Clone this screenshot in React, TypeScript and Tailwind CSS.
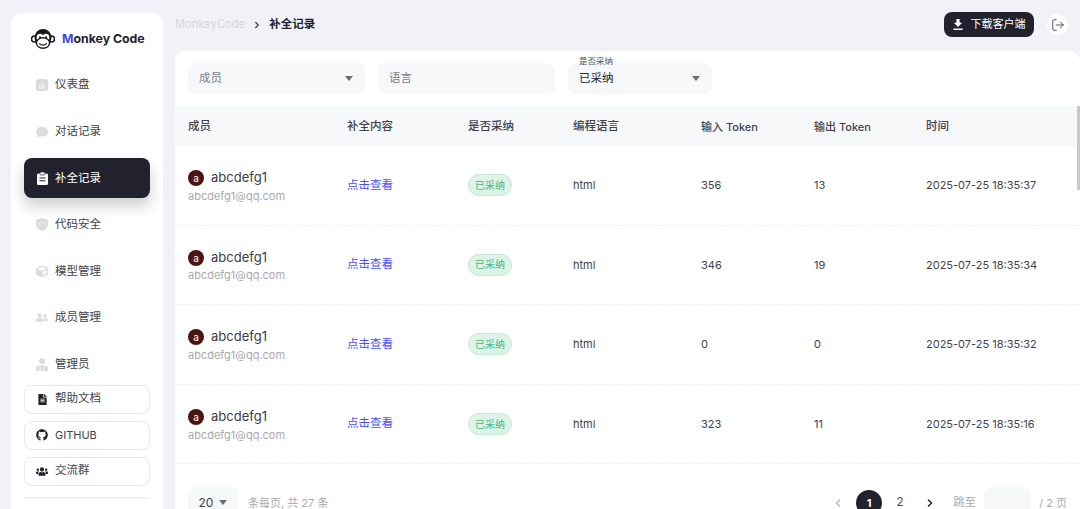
import { ChevronLeft, ChevronRight, LogOut } from "lucide-react";
import { FaGithub, FaUsers, FaFileAlt, FaCube, FaUserFriends, FaComment } from "react-icons/fa";

const font = "font-['Inter','Noto_Sans_CJK_SC',sans-serif]";

function ChartIcon() {
  return (
    <svg width="12" height="12" viewBox="0 0 12 12">
      <rect width="12" height="12" rx="2.5" fill="#d9d9db" />
      <path d="M3 6.5h1.4V10H3zM5.3 3h1.4v7H5.3zM7.6 5.5H9V10H7.6z" fill="#f1f1f2" />
    </svg>
  );
}

function ClipboardIcon() {
  return (
    <svg width="11" height="13" viewBox="0 0 11 13">
      <path d="M1.5 1.5h8A1.5 1.5 0 0 1 11 3v8.5A1.5 1.5 0 0 1 9.5 13h-8A1.5 1.5 0 0 1 0 11.5V3a1.5 1.5 0 0 1 1.5-1.5z" fill="#fff" />
      <rect x="3" y="0" width="5" height="3" rx="1" fill="#fff" stroke="#21222d" strokeWidth="0.7" />
      <path d="M2.5 6h6M2.5 8.7h6" stroke="#21222d" strokeWidth="1.1" />
    </svg>
  );
}

function ShieldIcon() {
  return (
    <svg width="12" height="13" viewBox="0 0 12 13">
      <path d="M6 0l6 1.8v4.7c0 3-2.5 5.3-6 6.5C2.5 11.8 0 9.5 0 6.5V1.8z" fill="#dcdcde" />
      <path d="M4.3 4.5L2.8 6l1.5 1.5M7.7 4.5L9.2 6 7.7 7.5" fill="none" stroke="#f4f4f5" strokeWidth="0.9" />
    </svg>
  );
}

function AdminIcon() {
  return (
    <svg width="12" height="13" viewBox="0 0 12 13">
      <circle cx="6" cy="3.2" r="3" fill="#dcdcde" />
      <path d="M0 13v-2.5C0 8.5 2 7.3 6 7.3s6 1.2 6 3.2V13z" fill="#dcdcde" />
      <path d="M4 8.5V13M8 8.5V13" stroke="#fff" strokeWidth="0.8" />
    </svg>
  );
}

function DownloadIcon() {
  return (
    <svg width="10" height="11" viewBox="0 0 10 11">
      <path d="M3.4 0h3.2v3.8H9.2L5 8 .8 3.8h2.6z" fill="#fff" />
      <rect x="0.3" y="9.5" width="9.4" height="1.4" fill="#fff" />
    </svg>
  );
}

const navItems = [
  { label: "仪表盘", icon: <ChartIcon /> },
  { label: "对话记录", icon: <FaComment size={12} /> },
  { label: "补全记录", icon: <ClipboardIcon />, active: true },
  { label: "代码安全", icon: <ShieldIcon /> },
  { label: "模型管理", icon: <FaCube size={13} /> },
  { label: "成员管理", icon: <FaUserFriends size={13} /> },
  { label: "管理员", icon: <AdminIcon /> },
];

const rows = [
  { input: "356", output: "13", time: "2025-07-25 18:35:37" },
  { input: "346", output: "19", time: "2025-07-25 18:35:34" },
  { input: "0", output: "0", time: "2025-07-25 18:35:32" },
  { input: "323", output: "11", time: "2025-07-25 18:35:16" },
];

const cols = "grid grid-cols-[159px_121px_105px_128px_113px_112px_1fr] items-center px-[13px]";

function Caret() {
  return <span className="w-0 h-0 border-x-[4px] border-x-transparent border-t-[5px] border-t-[#6b6b70]" />;
}

function MonkeyLogo() {
  return (
    <svg width="24" height="20" viewBox="0 0 24 20">
      <circle cx="3.5" cy="10" r="3" fill="#fff" stroke="#16161a" strokeWidth="1.6" />
      <circle cx="20.5" cy="10" r="3" fill="#fff" stroke="#16161a" strokeWidth="1.6" />
      <circle cx="12" cy="8.5" r="8.5" fill="#16161a" />
      <ellipse cx="9" cy="8.5" rx="3.4" ry="3.8" fill="#fff" />
      <ellipse cx="15" cy="8.5" rx="3.4" ry="3.8" fill="#fff" />
      <ellipse cx="12" cy="14" rx="6.6" ry="5.3" fill="#fff" stroke="#16161a" strokeWidth="1.4" />
      <circle cx="9" cy="8.2" r="1" fill="#16161a" />
      <circle cx="15" cy="8.2" r="1" fill="#16161a" />
      <path d="M8.5 14.7c1.8 1.8 5.2 1.8 7 0" fill="none" stroke="#16161a" strokeWidth="1.2" strokeLinecap="round" />
    </svg>
  );
}

function Sidebar() {
  return (
    <aside className="w-[152px] h-[520px] mt-[13px] ml-[11px] shrink-0 bg-white rounded-t-[10px] px-[13px] flex flex-col">
      <div className="flex items-center h-[24px] mt-[14px] ml-[7px] gap-[7px] shrink-0">
        <MonkeyLogo />
        <span className="text-[12.3px] font-bold text-[#21222d] whitespace-nowrap">
          <span className="text-[#3f45f5]">M</span>onkey Code
        </span>
      </div>
      <nav className="flex flex-col gap-[6.6px] mt-[14px] shrink-0">
        {navItems.map((item) => (
          <div
            key={item.label}
            className={
              item.active
                ? "h-10 rounded-[8px] bg-[#21222d] text-white flex items-center gap-[7px] px-[12px] text-[11.5px] shadow-[0_8px_14px_rgba(33,34,45,0.22)]"
                : "h-10 rounded-[8px] text-[#41424d] flex items-center gap-[7px] px-[12px] text-[11.5px]"
            }
          >
            <span className={item.active ? "w-[12px] flex justify-center text-white" : "w-[12px] flex justify-center text-[#dcdcde]"}>
              {item.icon}
            </span>
            {item.label}
          </div>
        ))}
      </nav>
      <div className="flex flex-col gap-[7px] shrink-0">
        <SideButton icon={<FaFileAlt size={11} />} label="帮助文档" />
        <SideButton icon={<FaGithub size={12} />} label="GITHUB" />
        <SideButton icon={<FaUsers size={13} />} label="交流群" />
      </div>
      <div className="h-[2px] bg-[#f0f1f4] mt-[11px]" />
    </aside>
  );
}

function SideButton({ icon, label }: { icon: React.ReactNode; label: string }) {
  return (
    <div className="h-[29px] rounded-[8px] border border-[#e8e8ec] flex items-center gap-[7px] px-[11px] text-[11.5px] text-[#41424d]">
      <span className="w-[12px] flex justify-center text-[#21222d]">{icon}</span>
      {label === "GITHUB" ? <span className="text-[11px]">{label}</span> : label}
    </div>
  );
}

function Filter({ label, caret, width, value }: { label: string; caret?: boolean; width: string; value?: string }) {
  return (
    <div className={`relative h-[31px] rounded-[8px] bg-[#f7f8fa] flex items-center justify-between pl-[11px] pr-[12px] ${width}`}>
      <span className={value ? "text-[11.5px] text-[#21222d]" : "text-[11.5px] text-[#7d7e85]"}>{value ?? label}</span>
      {caret && <Caret />}
      {value && (
        <span className="absolute left-[11px] top-[-7px] text-[8.5px] leading-[11px] text-[#55565e]">{label}</span>
      )}
    </div>
  );
}

function TableRow({ input, output, time }: { input: string; output: string; time: string }) {
  return (
    <div className={`${cols} h-[79.6px] border-b border-dashed border-[#eeeff2] text-[11px] text-[#41424d]`}>
      <div className="flex flex-col mt-[2px]">
        <div className="flex items-center gap-[7px]">
          <span className="w-4 h-4 rounded-full bg-[#4a1512] text-white text-[10px] leading-none flex items-center justify-center">a</span>
          <span className="text-[13px] text-[#3c3d48]">abcdefg1</span>
        </div>
        <span className="text-[11px] text-[#a9a9ae]">abcdefg1@qq.com</span>
      </div>
      <span className="text-[#4b50f5] text-[11.5px]">点击查看</span>
      <span className="w-[44px] h-[22px] rounded-full bg-[#ddf3e7] border border-[#c4e9d4] text-[#4fb37f] text-[10px] flex items-center justify-center">已采纳</span>
      <span>html</span>
      <span>{input}</span>
      <span>{output}</span>
      <span className="whitespace-nowrap">{time}</span>
    </div>
  );
}

export default function App() {
  return (
    <div className={`${font} h-[509px] w-[1080px] overflow-hidden bg-[#f0f2f8] flex`}>
      <Sidebar />
      <main className="flex-1 min-w-0 ml-[12px] flex flex-col">
        <header className="h-[51px] shrink-0 flex items-center justify-between pr-[12px]">
          <div className="flex items-center text-[11.5px] mt-[-2px]">
            <span className="text-[#d4d5da] text-[11.2px]">MonkeyCode</span>
            <ChevronRight size={10} strokeWidth={3} className="text-[#41424d] mx-[7px]" />
            <span className="font-bold text-[#21222d]">补全记录</span>
          </div>
          <div className="flex items-center gap-[13px] mt-[-2px]">
            <button className="h-[25px] w-[90px] rounded-[8px] bg-[#21222d] text-white text-[11px] flex items-center justify-center gap-[8px]">
              <DownloadIcon />
              下载客户端
            </button>
            <span className="w-[21px] h-[21px] rounded-full bg-white flex items-center justify-center text-[#55565e]">
              <LogOut size={14} strokeWidth={1.7} />
            </span>
          </div>
        </header>
        <section className="flex-1 bg-white rounded-tl-[10px] rounded-tr-[10px] relative flex flex-col">
          <div className="flex gap-[13px] px-[13px] pt-[12px] pb-[12px]">
            <Filter label="成员" caret width="w-[177px]" />
            <Filter label="语言" width="w-[177px]" />
            <Filter label="是否采纳" caret value="已采纳" width="w-[144px]" />
          </div>
          <div className={`${cols} h-10 pt-[2px] bg-[#f7f8fa] text-[11.5px] font-medium text-[#41424d]`}>
            <span>成员</span>
            <span>补全内容</span>
            <span>是否采纳</span>
            <span>编程语言</span>
            <span className="whitespace-nowrap text-[11px]">输入 Token</span>
            <span className="whitespace-nowrap text-[11px]">输出 Token</span>
            <span>时间</span>
          </div>
          {rows.map((row) => (
            <TableRow key={row.time} {...row} />
          ))}
          <div className="flex items-center justify-between px-[13px] mt-[23px] text-[11px]">
            <div className="flex items-center gap-[10px]">
              <div className="w-[50px] h-[31px] rounded-[8px] bg-[#f7f8fa] flex items-center justify-center gap-[6px] text-[12px] text-[#41424d]">
                20 <Caret />
              </div>
              <span className="text-[#a9a9ae]">条每页, 共 27 条</span>
            </div>
            <div className="flex items-center text-[#a9a9ae]">
              <ChevronLeft size={12} strokeWidth={2.5} className="text-[#b5b5ba] mr-[12px]" />
              <span className="w-[26px] h-[26px] rounded-full bg-[#21222d] text-white font-bold flex items-center justify-center">1</span>
              <span className="w-[26px] text-center ml-[5px] text-[#41424d] text-[11.5px]">2</span>
              <ChevronRight size={12} strokeWidth={3} className="text-[#21222d] ml-[11px] mr-[17px]" />
              <span className="text-[11.5px]">跳至</span>
              <span className="w-[47px] h-[31px] rounded-[8px] bg-[#f7f8fa] mx-[8px]" />
              <span>/ 2 页</span>
            </div>
          </div>
          <div className="absolute right-0 top-[55px] w-[3px] h-[84px] bg-[#c9c9cc]" />
        </section>
      </main>
    </div>
  );
}
